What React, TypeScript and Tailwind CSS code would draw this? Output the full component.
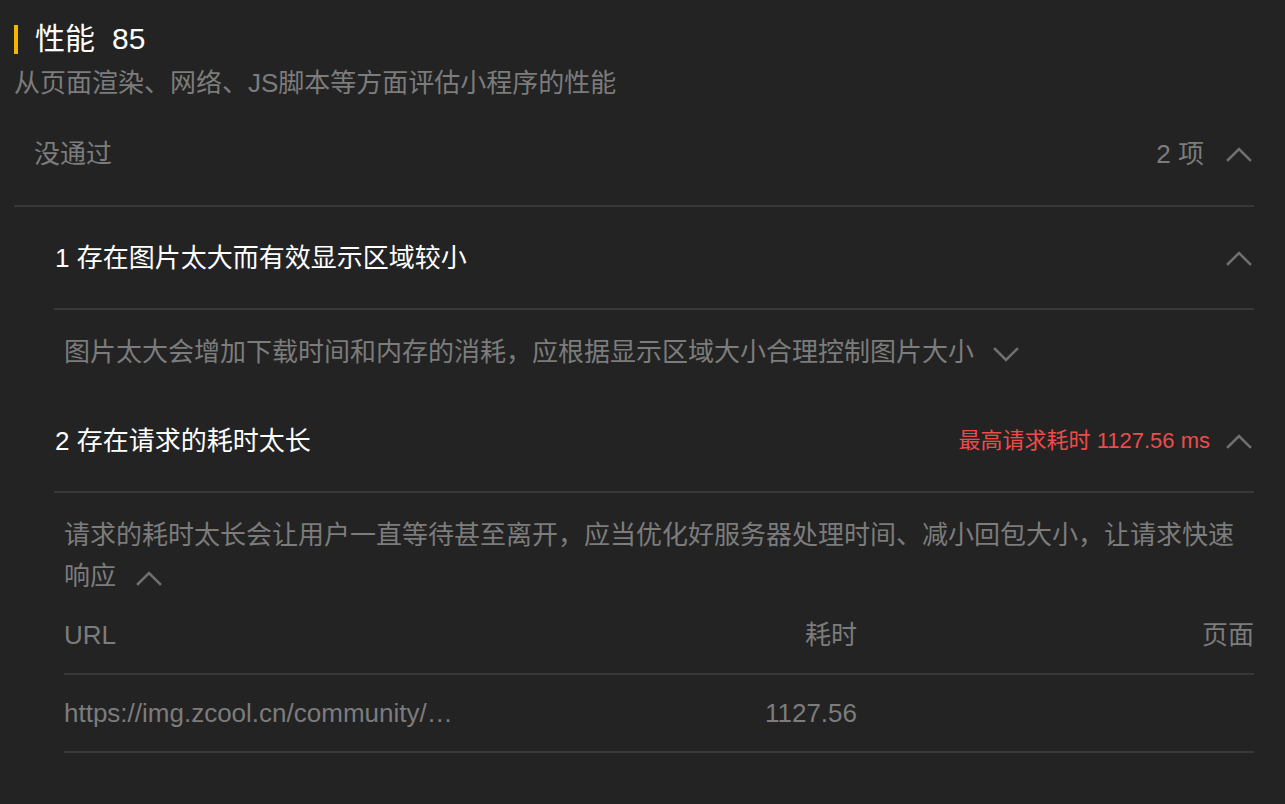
import React from "react";

const font = { fontFamily: '"Liberation Sans", "Noto Sans CJK SC", sans-serif' };

function Chevron({ up = true, className = "" }: { up?: boolean; className?: string }) {
  return (
    <svg
      width="26"
      height="16"
      viewBox="0 0 26 16"
      className={className}
      fill="none"
      stroke="#707070"
      strokeWidth="2.6"
      strokeLinecap="square"
    >
      {up ? <polyline points="2,14 13,3 24,14" /> : <polyline points="2,3 13,14 24,3" />}
    </svg>
  );
}

function ItemRow({ index, title, right }: { index: number; title: string; right?: React.ReactNode }) {
  return (
    <div className="flex h-[103px] items-center justify-between border-b-[2px] border-[#383838] pl-[1px] pr-[2px]">
      <span className="text-[26px] leading-[40px] text-white">
        {index} {title}
      </span>
      <div className="flex items-center gap-[16px]">
        {right}
        <Chevron />
      </div>
    </div>
  );
}

export default function App() {
  return (
    <div className="min-h-screen bg-[#232323] pl-[14px] pr-[31px] pt-[19px]" style={font}>
      <div className="flex items-center">
        <div className="h-[29px] w-[4px] bg-[#f5b400]" />
        <span className="ml-[17px] text-[30px] leading-[40px] text-white">性能</span>
        <span className="ml-[17px] text-[30px] leading-[40px] text-white">85</span>
      </div>
      <div className="mt-[4px] text-[26px] leading-[40px] text-[#7c7c7c]">
        从页面渲染、网络、JS脚本等方面评估小程序的性能
      </div>

      <div className="flex h-[104px] items-center justify-between border-b-[2px] border-[#383838] pl-[20px] pr-[2px]">
        <span className="text-[26px] leading-[40px] text-[#7c7c7c]">没通过</span>
        <div className="flex items-center gap-[22px]">
          <span className="text-[26px] leading-[40px] text-[#7c7c7c]">2 项</span>
          <Chevron />
        </div>
      </div>

      <div className="ml-[40px]">
        <ItemRow index={1} title="存在图片太大而有效显示区域较小" />
        <div className="pb-[18px] pl-[10px] pt-[22px] text-[26px] leading-[40px] text-[#7c7c7c]">
          图片太大会增加下载时间和内存的消耗，应根据显示区域大小合理控制图片大小
          <Chevron up={false} className="ml-[19px] inline-block align-middle" />
        </div>

        <ItemRow
          index={2}
          title="存在请求的耗时太长"
          right={<span className="text-[22px] leading-[30px] text-[#ee4b4b]">最高请求耗时 1127.56 ms</span>}
        />
        <div className="pl-[10px]">
          <div className="pt-[22px] text-[26px] leading-[41px] text-[#7c7c7c]">
            请求的耗时太长会让用户一直等待甚至离开，应当优化好服务器处理时间、减小回包大小，让请求快速响应
            <Chevron className="ml-[20px] inline-block align-middle" />
          </div>

          <div className="grid h-[78px] grid-cols-[600px_193px_1fr] items-center border-b-[2px] border-[#383838] text-[26px] leading-[40px] text-[#7c7c7c]">
            <span>URL</span>
            <span className="text-right">耗时</span>
            <span className="text-right">页面</span>
          </div>
          <div className="grid h-[78px] grid-cols-[600px_193px_1fr] items-center border-b-[2px] border-[#383838] text-[26px] leading-[40px] text-[#7c7c7c]">
            <span>https://img.zcool.cn/community/…</span>
            <span className="text-right">1127.56</span>
            <span className="text-right"></span>
          </div>
        </div>
      </div>
    </div>
  );
}
